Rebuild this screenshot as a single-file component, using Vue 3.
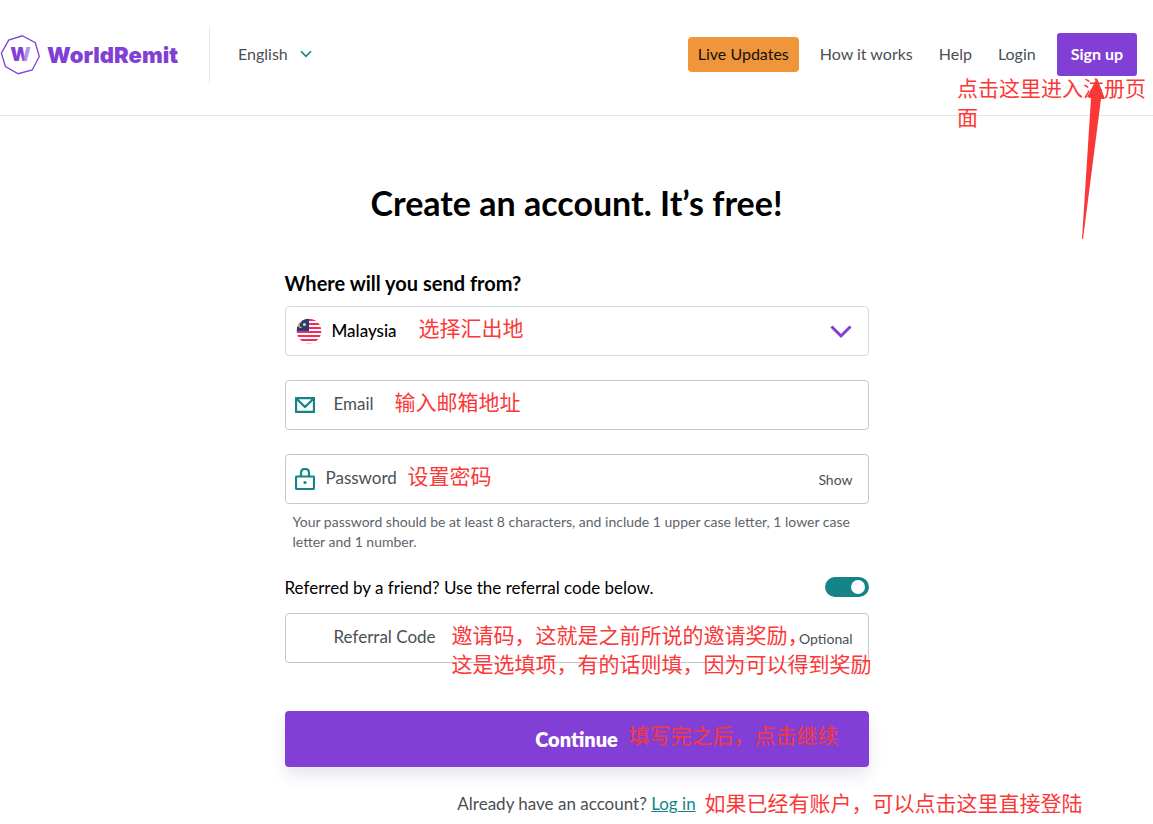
<script setup>
import { ref } from 'vue'

const country = ref('Malaysia')
const email = ref('')
const password = ref('')
const referral = ref('')
const hasReferral = ref(true)
const showPassword = ref(false)
</script>

<template>
  <div class="page">
    <header class="header">
      <a class="logo" href="#" aria-label="WorldRemit">
        <svg class="logo-mark" viewBox="0 0 40 40" aria-hidden="true">
          <defs>
            <linearGradient id="fade" x1="0" x2="1" y1="0" y2="0">
              <stop offset="0.6" stop-color="#823fd6" />
              <stop offset="0.72" stop-color="#b694ea" />
            </linearGradient>
          </defs>
          <polygon points="22.3,0.8 35.3,7.8 39.3,21.5 32.2,35 18.2,38.7 5.4,31.5 1.4,18.1 8.7,5.1" fill="none" stroke="#823fd6" stroke-width="1.3" />
          <text x="20.5" y="26" text-anchor="middle" class="mark-letter" fill="url(#fade)">W</text>
        </svg>
        <span class="wordmark">WorldRemit</span>
      </a>
      <button class="language" type="button">
        English
        <svg class="small-chevron" viewBox="0 0 12 8" aria-hidden="true">
          <path d="M1 1.3 6 6.3 11 1.3" fill="none" stroke="#138488" stroke-width="1.6" />
        </svg>
      </button>
      <nav class="nav">
        <a class="updates" href="#">Live Updates</a>
        <a href="#">How it works</a>
        <a href="#">Help</a>
        <a href="#">Login</a>
        <a class="signup" href="#">Sign up</a>
      </nav>
      <p class="note note-signup">点击这里进入注册页面</p>
      <svg class="arrow" viewBox="0 0 30 162" aria-hidden="true">
        <path d="M19 1 27 22 23 22 5 162 4 162 13 21 9 20Z" fill="#fb3838" />
      </svg>
    </header>

    <main class="main">
      <form class="form" @submit.prevent>
        <h1>Create an account. It’s free!</h1>

        <label class="question" for="country">Where will you send from?</label>
        <div class="field country">
          <svg class="flag" viewBox="0 0 26 26" aria-hidden="true">
            <defs>
              <clipPath id="round"><circle cx="13" cy="13" r="12.3" /></clipPath>
            </defs>
            <g clip-path="url(#round)">
              <rect width="26" height="26" fill="#fff" />
              <path d="M0 2H26M0 6H26M0 10H26M0 14H26M0 18H26M0 22H26M0 26H26" stroke="#f52d56" stroke-width="2" />
              <rect width="13" height="13" fill="#243a86" />
              <path d="M6.5 4.4A3 3 0 1 0 6.5 9.3 2.5 2.5 0 1 1 6.5 4.4Z" fill="#f5d842" />
              <circle cx="8.4" cy="6.5" r="1.6" fill="#f5d842" />
            </g>
          </svg>
          <select id="country" v-model="country">
            <option>Malaysia</option>
          </select>
          <svg class="chevron" viewBox="0 0 22 14" aria-hidden="true">
            <path d="M1.5 1.5 11 11 20.5 1.5" fill="none" stroke="#823fd6" stroke-width="3" />
          </svg>
          <span class="note note-country">选择汇出地</span>
        </div>

        <div class="field email">
          <svg class="mail" viewBox="0 0 20 16" aria-hidden="true">
            <path d="M1 1H19V15H1Z M1.3 1.5 10 10 18.7 1.5" fill="none" stroke="#138488" stroke-width="2.3" stroke-linejoin="round" />
          </svg>
          <label for="email">Email</label>
          <input id="email" v-model="email" type="email" />
          <span class="note note-email">输入邮箱地址</span>
        </div>

        <div class="field password">
          <svg class="lock" viewBox="0 0 20 22" aria-hidden="true">
            <path d="M2 8.5H18Q19 8.5 19 9.5V20Q19 21 18 21H2Q1 21 1 20V9.5Q1 8.5 2 8.5ZM6 8.5V5Q6 1 10 1T14 5V8.5" fill="none" stroke="#138488" stroke-width="2.2" />
            <circle cx="10" cy="14.5" r="1.6" fill="#138488" />
          </svg>
          <label for="password">Password</label>
          <input id="password" v-model="password" :type="showPassword ? 'text' : 'password'" />
          <button class="show" type="button" @click="showPassword = !showPassword">Show</button>
          <span class="note note-password">设置密码</span>
        </div>
        <p class="hint">Your password should be at least 8 characters, and include 1 upper case letter, 1 lower case letter and 1 number.</p>

        <div class="referral-row">
          <label for="has-referral">Referred by a friend? Use the referral code below.</label>
          <input id="has-referral" v-model="hasReferral" class="switch" type="checkbox" role="switch" />
        </div>
        <div class="field referral">
          <label for="referral">Referral Code</label>
          <input id="referral" v-model="referral" type="text" />
          <span class="optional">Optional</span>
          <span class="note note-referral">邀请码，这就是之前所说的邀请奖励，<br />这是选填项，有的话则填，因为可以得到奖励</span>
        </div>

        <div class="submit">
          <button class="continue" type="submit">Continue</button>
          <span class="note note-continue">填写完之后，点击继续</span>
        </div>

        <p class="login">
          Already have an account? <a href="#">Log in</a>
          <span class="note note-login">如果已经有账户，可以点击这里直接登陆</span>
        </p>
      </form>
    </main>
  </div>
</template>

<style>
body {
  margin: 0;
  background: #fff;
}
</style>

<style scoped>
.page {
  overflow-x: hidden;
  font-family: Lato, "Noto Sans CJK SC", sans-serif;
  font-size: 16px;
  color: #4a4f55;
}

.page * {
  box-sizing: border-box;
}

a {
  color: inherit;
  text-decoration: none;
}

button,
input,
select {
  border: 0;
  padding: 0;
  background: none;
  font: inherit;
  color: inherit;
}

.header {
  position: relative;
  display: flex;
  align-items: center;
  height: 116px;
  padding: 0 16px 6px 0;
  border-bottom: 1px solid #e6e6e8;
}

.logo {
  display: flex;
  align-items: center;
  gap: 7px;
  height: 56px;
  width: 210px;
  border-right: 1px solid #e6e6e8;
  color: #823fd6;
}

.logo-mark {
  width: 40px;
  height: 40px;
}

.mark-letter {
  font-family: Inter, sans-serif;
  font-size: 19px;
  font-weight: 900;
}

.wordmark {
  font-family: Inter, sans-serif;
  font-size: 22px;
  font-weight: 900;
}

.language {
  display: flex;
  align-items: center;
  gap: 12px;
  margin-left: 28px;
  padding-bottom: 2px;
}

.small-chevron {
  width: 12px;
  height: 8px;
}

.nav {
  display: flex;
  align-items: center;
  margin-left: auto;
  gap: 26px;
  line-height: 17px;
}

.nav a {
  padding-bottom: 2px;
}

.nav .updates {
  padding: 8px 10px 10px;
  margin-right: -5px;
  border-radius: 4px;
  background: #ef953a;
  color: #111;
}

.nav .signup {
  padding: 12px 14px 14px;
  margin-left: -5px;
  border-radius: 3px;
  background: #823fd6;
  color: #fff;
  font-weight: 700;
}

.note {
  position: absolute;
  margin: 0;
  font-family: "Noto Sans CJK SC", sans-serif;
  font-size: 21px;
  font-weight: 400;
  line-height: 29px;
  color: #fb3838;
  white-space: nowrap;
  pointer-events: none;
}

.note-signup {
  top: 73px;
  right: 0;
  width: 196px;
  white-space: normal;
}

.arrow {
  position: absolute;
  top: 77px;
  right: 45px;
  width: 30px;
  height: 162px;
}

.main {
  padding: 67px 16px 8px;
}

.form {
  display: flex;
  flex-direction: column;
  max-width: 584px;
  margin: 0 auto;
  font-size: 17px;
}

h1 {
  margin: 0 0 48px;
  font-size: 34px;
  font-weight: 700;
  line-height: 40px;
  color: #000;
  text-align: center;
}

.question {
  margin-bottom: 11px;
  font-size: 20px;
  font-weight: 700;
  line-height: 24px;
  color: #000;
}

.field {
  position: relative;
  display: flex;
  align-items: center;
  height: 50px;
  margin-bottom: 24px;
  padding: 0 15px 0 9px;
  border: 1px solid #c6c7c9;
  border-radius: 4px;
}

.field label {
  padding-bottom: 4px;
}

.field input {
  flex: 1;
  min-width: 0;
  height: 100%;
  outline: 0;
}

.country {
  padding: 0 16px 0 10px;
  border-color: #d5d9de;
}

.flag {
  width: 26px;
  height: 26px;
}

.country select {
  flex: 1;
  height: 100%;
  padding: 0 0 2px 10px;
  appearance: none;
  outline: 0;
  color: #000;
  font-weight: 500;
}

.chevron {
  width: 22px;
  height: 14px;
  margin-top: 2px;
}

.mail {
  width: 20px;
  height: 16px;
  margin-right: 19px;
}

.lock {
  width: 20px;
  height: 22px;
  margin-right: 11px;
}

.field.password {
  margin-bottom: 8px;
}

.show,
.optional {
  font-size: 14px;
}

.hint {
  margin: 0 0 25px;
  padding: 0 8px;
  font-size: 14px;
  line-height: 20px;
  color: #5d646b;
}

.referral-row {
  display: flex;
  align-items: center;
  justify-content: space-between;
  height: 20px;
  margin-bottom: 16px;
  color: #000;
}

.switch {
  display: flex;
  align-items: center;
  width: 44px;
  height: 20px;
  margin: 0;
  padding: 0 4px;
  appearance: none;
  border-radius: 10px;
  background: #bbb;
}

.switch::after {
  content: "";
  width: 14px;
  height: 14px;
  border-radius: 7px;
  background: #fff;
}

.switch:checked {
  justify-content: flex-end;
  background: #138488;
}

.field.referral {
  margin-bottom: 48px;
  padding-left: 48px;
}

.submit {
  position: relative;
  margin-bottom: 25px;
}

.continue {
  width: 100%;
  height: 56px;
  border-radius: 4px;
  background: #823fd6;
  box-shadow: 0 8px 16px rgba(60, 30, 100, 0.12);
  font-size: 20px;
  font-weight: 800;
  color: #fff;
}

.login {
  position: relative;
  margin: 0;
  line-height: 24px;
  text-align: center;
}

.login a {
  color: #138488;
  text-decoration: underline;
}

.note-country {
  top: 6px;
  left: 133px;
}

.note-email {
  top: 6px;
  left: 109px;
}

.note-password {
  top: 6px;
  left: 122px;
}

.note-referral {
  top: 6px;
  left: 166px;
}

.note-continue {
  top: 9px;
  left: 344px;
}

.note-login {
  top: -4px;
  left: 420px;
}
</style>
